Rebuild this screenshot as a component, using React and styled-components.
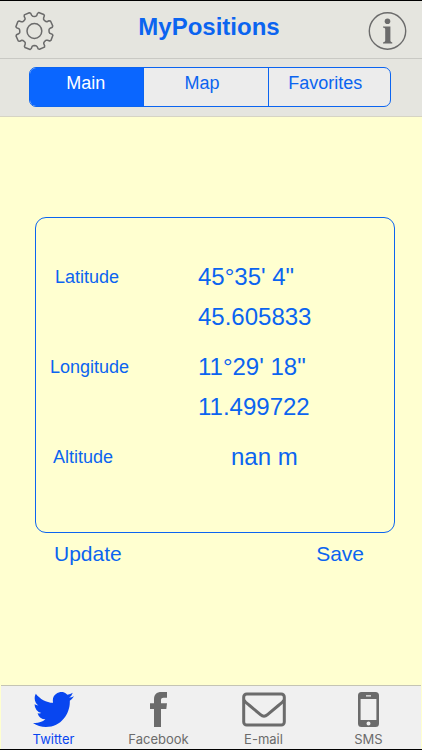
import React from "react";
import styled, { createGlobalStyle } from "styled-components";

const blue = "#0b64f0";
const grey = "#6b6b6b";

const GlobalStyle = createGlobalStyle`
  * { box-sizing: border-box; }
  body { margin: 0; background: #ffffd0; }
  button { margin: 0; padding: 0; border: 0; background: none; color: inherit; font: inherit; cursor: pointer; }
`;

const Screen = styled.div`
  display: flex;
  flex-direction: column;
  min-height: 100vh;
  border-top: 1px solid #000;
  border-bottom: 1px solid #000;
  background: #ffffd0;
  color: ${blue};
  font-family: "Liberation Sans", Arial, sans-serif;
`;

const Header = styled.header`
  display: flex;
  align-items: center;
  justify-content: space-between;
  height: 58px;
  padding: 2px 14px 0;
  border-bottom: 1px solid #c9c9c4;
  background: #e5e5df;
`;

const Title = styled.h1`
  margin: 0;
  padding: 0 4px 8px 0;
  font-size: 24px;
  line-height: 28px;
`;

const IconButton = styled.button`
  display: flex;
  color: ${grey};
`;

const SegmentBar = styled.div`
  padding: 8px 31px 9px 29px;
  border-bottom: 1px solid #d6d4c4;
  background: #e5e5df;
`;

const Segments = styled.nav`
  display: grid;
  grid-template-columns: 114fr 125fr 123fr;
  height: 40px;
  overflow: hidden;
  border: 1px solid ${blue};
  border-radius: 7px;
  background: #ececec;
`;

const Segment = styled.button`
  && {
    padding: 0 ${(p) => (p.$first ? 2 : 8)}px 8px 0;
    border-left: ${(p) => (p.$first ? "0" : `1px solid ${blue}`)};
    background: ${(p) => (p.$active ? "#0a66ff" : "transparent")};
    color: ${(p) => (p.$active ? "#fff" : blue)};
    font-size: 18px;
    line-height: 24px;
  }
`;

const Main = styled.main`
  flex: 1;
  padding: 100px 27px 24px 35px;
`;

const Card = styled.dl`
  display: flex;
  flex-direction: column;
  gap: 10px;
  height: 316px;
  margin: 0;
  padding: 39px 14px;
  border: 1px solid ${blue};
  border-radius: 11px;
`;

const Reading = styled.div`
  display: grid;
  grid-template-columns: 148px 1fr;
  line-height: 40px;
`;

const Label = styled.dt`
  grid-column: 1;
  padding-left: ${(p) => p.$inset}px;
  font-size: 18px;
`;

const Value = styled.dd`
  grid-column: 2;
  margin: 0;
  padding-left: ${(p) => (p.$indent ? 33 : 0)}px;
  font-size: 24px;
`;

const Actions = styled.div`
  display: flex;
  justify-content: space-between;
  padding: 7px 31px 0 19px;
`;

const Action = styled.button`
  && {
    font-size: 21px;
    line-height: 28px;
  }
`;

const TabBar = styled.nav`
  display: grid;
  grid-template-columns: repeat(4, 1fr);
  height: 64px;
  margin: 0 1px;
  border-top: 1px solid #c4c4b4;
  background: #f0f0f0;
`;

const Tab = styled.button`
  && {
    display: flex;
    flex-direction: column;
    align-items: center;
    gap: 3px;
    padding-top: 6px;
    color: ${(p) => (p.$active ? "#0846f0" : grey)};
    font-family: Inter, Roboto, sans-serif;
    font-size: 13px;
    line-height: 18px;
  }
`;

const gearPoints = Array.from({ length: 8 }, (_, i) => {
  const centre = 22.5 + i * 45;
  return [
    [-17, 14.9],
    [-14, 15.6],
    [-12.5, 17.8],
    [-9.5, 19],
    [7, 19],
    [10.5, 18.3],
    [12.5, 16],
    [16, 14.8],
    [22.5, 14.6],
  ]
    .map(([offset, radius]) => {
      const angle = ((centre + offset) * Math.PI) / 180;
      return `${(20.4 + radius * Math.cos(angle)).toFixed(2)},${(20 + radius * Math.sin(angle)).toFixed(2)}`;
    })
    .join(" ");
}).join(" ");

const GearIcon = () => (
  <svg width="40" height="40" viewBox="0 0 40 40" fill="none" stroke="currentColor" strokeWidth="1.5" strokeLinejoin="round" aria-hidden="true">
    <polygon points={gearPoints} />
    <circle cx="20.4" cy="20" r="7.4" />
  </svg>
);

const InfoIcon = () => (
  <svg width="40" height="40" viewBox="0 0 40 40" fill="currentColor" aria-hidden="true">
    <circle cx="19.5" cy="20" r="18.2" fill="none" stroke="currentColor" strokeWidth="1.4" />
    <circle cx="19.5" cy="10.3" r="2.8" />
    <path d="M15 15.4H22.4V29.8Q22.4 31.2 24.3 31.4V32.4H15V31.4Q17.2 31.2 17.2 29.8V18Q17.2 16.6 15 16.4Z" />
  </svg>
);

const TwitterIcon = () => (
  <svg width="41" height="35" viewBox="0 2.2 24 19.6" preserveAspectRatio="none" fill="currentColor" aria-hidden="true">
    <path d="M23.954 4.569a10 10 0 0 1-2.825.775 4.958 4.958 0 0 0 2.163-2.723 9.99 9.99 0 0 1-3.127 1.184 4.92 4.92 0 0 0-8.384 4.482C7.691 8.094 4.066 6.13 1.64 3.161a4.822 4.822 0 0 0-.666 2.475c0 1.71.87 3.213 2.188 4.096a4.904 4.904 0 0 1-2.228-.616v.061a4.923 4.923 0 0 0 3.946 4.827 4.996 4.996 0 0 1-2.212.085 4.937 4.937 0 0 0 4.604 3.417 9.868 9.868 0 0 1-6.102 2.105c-.39 0-.779-.023-1.17-.067a13.995 13.995 0 0 0 7.557 2.209c9.054 0 13.999-7.496 13.999-13.986 0-.209 0-.42-.015-.63a9.936 9.936 0 0 0 2.46-2.548z" />
  </svg>
);

const FacebookIcon = () => (
  <svg width="17" height="35" viewBox="0 0 17 35" fill="currentColor" aria-hidden="true">
    <path d="M4 35V17H0V11.2H4V7.6C4 2.6 6.3 0 11.6 0H17V5.8H13.6C11.4 5.8 11 6.7 11 8.4V11.2H17L16.3 17H11V35Z" />
  </svg>
);

const MailIcon = () => (
  <svg width="44" height="35" viewBox="0 0 44 35" fill="none" stroke="currentColor" strokeWidth="3" strokeLinejoin="round" aria-hidden="true">
    <rect x="1.7" y="2" width="40.6" height="31" rx="3" />
    <path d="M2 8C3 10.4 5 11.6 7 13L18.5 22.6Q22 25.8 25.5 22.6L37 13C39 11.6 41 10.4 42 8" />
  </svg>
);

const PhoneIcon = () => (
  <svg width="21" height="35" viewBox="0 0 21 35" fill="currentColor" aria-hidden="true">
    <path fillRule="evenodd" d="M3.5 0H17.5Q21 0 21 3.5V31.5Q21 35 17.5 35H3.5Q0 35 0 31.5V3.5Q0 0 3.5 0ZM2.6 7V28H18.4V7ZM8 3.2V4.6H13V3.2ZM10.5 29.5A2 2 0 1 0 10.5 33.5A2 2 0 1 0 10.5 29.5Z" />
  </svg>
);

const tabs = [
  { name: "Twitter", Icon: TwitterIcon, active: true },
  { name: "Facebook", Icon: FacebookIcon },
  { name: "E-mail", Icon: MailIcon },
  { name: "SMS", Icon: PhoneIcon },
];

export default function App() {
  return (
    <>
      <GlobalStyle />
      <Screen>
        <Header>
          <IconButton aria-label="Settings"><GearIcon /></IconButton>
          <Title>MyPositions</Title>
          <IconButton aria-label="Information"><InfoIcon /></IconButton>
        </Header>
        <SegmentBar>
          <Segments>
            <Segment $first $active aria-current="page">Main</Segment>
            <Segment>Map</Segment>
            <Segment>Favorites</Segment>
          </Segments>
        </SegmentBar>
        <Main>
          <Card>
            <Reading>
              <Label $inset={5}>Latitude</Label>
              <Value>45°35' 4"</Value>
              <Value>45.605833</Value>
            </Reading>
            <Reading>
              <Label $inset={0}>Longitude</Label>
              <Value>11°29' 18"</Value>
              <Value>11.499722</Value>
            </Reading>
            <Reading>
              <Label $inset={3}>Altitude</Label>
              <Value $indent>nan m</Value>
            </Reading>
          </Card>
          <Actions>
            <Action>Update</Action>
            <Action>Save</Action>
          </Actions>
        </Main>
        <TabBar>
          {tabs.map(({ name, Icon, active }) => (
            <Tab key={name} $active={active} aria-current={active ? "page" : undefined}>
              <Icon />
              {name}
            </Tab>
          ))}
        </TabBar>
      </Screen>
    </>
  );
}
